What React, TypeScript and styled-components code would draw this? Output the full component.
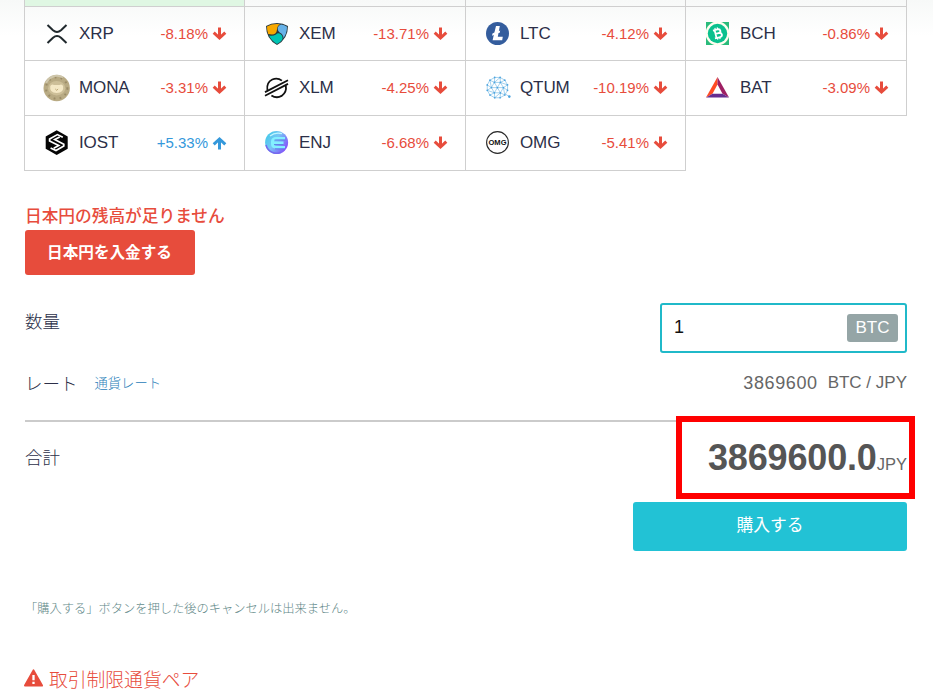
import React from "react";
import styled, { createGlobalStyle } from "styled-components";

const GlobalStyle = createGlobalStyle`
  * { box-sizing: border-box; }
  body {
    margin: 0;
    height: 695px;
    overflow: hidden;
    background: #fff linear-gradient(#f7f9f8, #ffffff) no-repeat;
    background-size: 100% 36px;
    font-family: "Liberation Sans", "Noto Sans CJK JP", sans-serif;
    color: #2c2f48;
  }
`;

const Page = styled.main`
  display: flex;
  flex-direction: column;
  width: 883px;
  margin-left: 24px;
`;

const Pairs = styled.section`
  display: grid;
  grid-template-columns: 220px 221px 220px 221px;
  grid-template-rows: 7px 54px 55px 55px;
  width: 883px;
  border-left: 1px solid #cfcfcf;
`;

const Cell = styled.div<{ $active?: boolean }>`
  display: flex;
  align-items: center;
  padding: 0 17px 0 18px;
  overflow: hidden;
  border-right: 1px solid #cfcfcf;
  border-bottom: 1px solid #cfcfcf;
  background: ${(p) => (p.$active ? "#dff7e3" : "transparent")};
`;

const Logo = styled.svg`
  flex: none;
  width: 28px;
  height: 28px;
`;

const Name = styled.span`
  flex: 1;
  margin-left: 8px;
  font-size: 17px;
  line-height: 20px;
  letter-spacing: -0.1px;
`;

const Change = styled.span<{ $up?: boolean }>`
  display: flex;
  align-items: center;
  gap: 4px;
  font-size: 15px;
  line-height: 20px;
  color: ${(p) => (p.$up ? "#3498db" : "#e74c3c")};
`;

const Arrow = styled.svg<{ $up?: boolean }>`
  width: 15px;
  height: 14px;
  transform: ${(p) => (p.$up ? "rotate(180deg)" : "none")};
`;

const Shortage = styled.p`
  margin: 34px 0 0;
  padding-left: 1px;
  height: 25px;
  font-size: 16.7px;
  font-weight: 500;
  line-height: 24px;
  color: #e74c3c;
`;

const Button = styled.button`
  border: 0;
  border-radius: 3px;
  color: #fff;
  font-family: inherit;
`;

const DepositButton = styled(Button)`
  width: 170px;
  height: 45px;
  margin-left: 0.5px;
  padding: 0 0 4px;
  background: #e74c3c;
  font-size: 15.6px;
  font-weight: 700;
`;

const Row = styled.div<{ $height: number; $top?: number }>`
  position: relative;
  display: flex;
  justify-content: space-between;
  height: ${(p) => p.$height}px;
  margin-top: ${(p) => p.$top || 0}px;
`;

const Label = styled.div<{ $top: number }>`
  display: flex;
  align-items: center;
  gap: 17px;
  height: 26px;
  margin-top: ${(p) => p.$top}px;
  padding-left: 1px;
  font-size: 17.5px;
  font-weight: 300;
`;

const RateLink = styled.a`
  font-size: 13.3px;
  color: #2980b9;
`;

const Field = styled.div`
  display: flex;
  align-items: center;
  justify-content: space-between;
  width: 247px;
  height: 50px;
  padding: 0 7px 1px 12px;
  border: 2px solid #20b9c9;
  border-radius: 3px;
  background: #fff;
  color: #111;
  font-size: 18px;
`;

const Unit = styled.span`
  width: 51px;
  height: 28px;
  border-radius: 3px;
  background: #95a5a6;
  color: #fff;
  font-size: 17px;
  line-height: 27px;
  text-align: center;
`;

const Rate = styled.div`
  display: flex;
  align-items: center;
  gap: 10px;
  height: 26px;
  margin-top: 17px;
  font-size: 17px;
  color: #666;
`;

const RateValue = styled.span`
  font-size: 18px;
  letter-spacing: 0.6px;
`;

const Divider = styled.hr`
  width: 882px;
  height: 2px;
  margin: 0 0 0 1px;
  border: 0;
  background: #cbcbcb;
`;

const Total = styled.div`
  display: flex;
  align-items: baseline;
  margin-top: 15px;
  font-size: 16.5px;
  line-height: 42px;
  color: #666;
`;

const Amount = styled.strong`
  font-size: 36px;
  letter-spacing: -0.15px;
  color: #555;
`;

const Highlight = styled.div`
  position: absolute;
  top: -6px;
  right: -8px;
  width: 239px;
  height: 83px;
  border: 6px solid #f00;
`;

const BuyButton = styled(Button)`
  align-self: flex-end;
  width: 274px;
  height: 49px;
  padding: 0 0 5px;
  background: #22c2d5;
  font-size: 16.8px;
  font-weight: 400;
`;

const Note = styled.p`
  margin: 46px 0 0;
  padding-left: 1px;
  height: 24px;
  font-size: 12.25px;
  font-weight: 300;
  line-height: 24px;
  color: #5f8888;
`;

const Restricted = styled.h2`
  display: flex;
  align-items: center;
  gap: 6px;
  height: 28px;
  margin: 43px 0 0;
  font-size: 18.8px;
  font-weight: 300;
  color: #e74c3c;
`;

const WarningMark = styled.svg`
  width: 19px;
  height: 18px;
`;

const ringPoints = (count: number, radius: number, turn = 0) =>
  Array.from({ length: count }, (_, i) => {
    const a = (i / count) * Math.PI * 2 + turn;
    return [14 + radius * Math.cos(a), 14 + radius * Math.sin(a)];
  });

const qtumOuter = ringPoints(12, 10.5, 0.26);
const qtumInner = ringPoints(6, 6, 0);

const logos: Record<string, React.ReactNode> = {
  XRP: (
    <g fill="none" stroke="#20292d" strokeWidth="2">
      <path d="M4.5 5 L10 10.3 Q14 13.8 18 10.3 L23.5 5" />
      <path d="M4.5 23 L10 17.7 Q14 14.2 18 17.7 L23.5 23" />
    </g>
  ),
  XEM: (
    <>
      <path d="M14 3 Q20 3 25 6 Q25 19 14 25 Q3 19 3 6 Q8 3 14 3Z" fill="#29383d" />
      <path d="M4 6.4 Q10 3.2 17 4.2 Q14 6 14 9.5 Q13.5 14.5 9 14.5 L5.2 14 Q3.9 10.5 4 6.4Z" fill="#f7a800" />
      <path d="M18 4.5 Q21.4 5 24 6.7 Q24 13 20.6 18 Q20 14 17 12.7 Q14 10.5 15 7 Q16 5 18 4.5Z" fill="#67b2e8" />
      <path d="M6 15.5 Q10 16.2 13 14.5 Q15 12.3 18 14.4 Q20.5 17 19 20 Q17 22.7 14 24 Q8.5 21 6 15.5Z" fill="#00c4b3" />
    </>
  ),
  LTC: (
    <>
      <circle cx="13.5" cy="13.5" r="11.5" fill="#345d9d" />
      <path d="M12 6 H15.8 L13.8 16.8 H18.8 L18.2 20.2 H8.6 L9.8 15 L8 15.7 L8.5 13.4 L10.4 12.6Z M13.8 11.4 L16.2 10.4 L15.7 12.8 L13.3 13.7Z" fill="#fff" />
    </>
  ),
  BCH: (
    <>
      <path d="M2 2 H25 V25 H2Z" fill="#2abb7b" />
      <circle cx="13.5" cy="13.5" r="11.9" fill="#fffdf0" />
      <circle cx="13.5" cy="13.5" r="9.7" fill="#0ac18e" />
      <g transform="translate(-.5 -.5) rotate(-14 14 14)" fill="none" stroke="#fff" strokeWidth="1.8">
        <path d="M10.3 10 H15 Q17.4 10 17.4 12 Q17.4 13.9 15 13.9 H12 M15 13.9 Q18 13.9 18 16 Q18 18.2 15 18.2 H10.3 M12 10 V18.2" />
        <path d="M12.8 8 V10 M15.2 8 V10 M12.8 18 V20.1 M15.2 18 V20.1" strokeWidth="1.2" />
      </g>
    </>
  ),
  MONA: (
    <>
      <circle cx="13.7" cy="14" r="13.2" fill="#b9ab84" />
      <circle cx="13.7" cy="14" r="10.7" fill="none" stroke="#9b8c67" strokeWidth="2" strokeDasharray="1.8 4.2" />
      <path d="M3 9 A12 12 0 0 1 20 3.5" fill="none" stroke="#d9d3be" strokeWidth="2" opacity=".7" />
      <ellipse cx="13.7" cy="14.2" rx="8.6" ry="7.3" fill="#cdbf98" />
      <path d="M7.3 12 Q8.7 9.4 11 11 H16.4 Q18.7 9.4 20.1 12 Q21.2 19 13.7 19 Q6.2 19 7.3 12Z" fill="#f4e8c5" />
      <path d="M12.3 15 L13.7 16.3 L15.1 15" fill="none" stroke="#b7a26f" strokeWidth=".9" />
    </>
  ),
  XLM: (
    <g fill="none" stroke="#111" strokeWidth="1.8">
      <path d="M4.4 16 Q3.2 8.5 9.3 5.5 Q14.4 3.2 18.9 6.6" />
      <path d="M22.8 11.5 Q24 18.3 18.6 21.9 Q13.6 24.8 8.4 21.4" />
      <path d="M2 18.1 L25 6.3 M2 21.7 L25 9.9" />
    </g>
  ),
  QTUM: (
    <g transform="translate(-.6 -.4)" fill="none" stroke="#76b9e5" strokeWidth=".65">
      <polygon points={qtumOuter.map((p) => p.join(",")).join(" ")} />
      <polygon points={qtumInner.map((p) => p.join(",")).join(" ")} />
      {qtumInner.map(([x, y], i) => (
        <React.Fragment key={i}>
          <path d={`M14 14 L${x} ${y}`} />
          {[-1, 0, 1].map((o) => {
            const q = qtumOuter[(i * 2 + o + 12) % 12];
            return <path key={o} d={`M${x} ${y} L${q[0]} ${q[1]}`} />;
          })}
        </React.Fragment>
      ))}
      {[...qtumOuter, ...qtumInner, [14, 14]].map(([x, y], i) => (
        <circle key={i} cx={x} cy={y} r=".85" fill="#4aa3df" stroke="none" />
      ))}
      <path d="M21.5 20 L25.6 22.9" />
      <circle cx="25.9" cy="23" r="1.3" fill="#4aa3df" stroke="none" />
    </g>
  ),
  BAT: (
    <>
      <path d="M13.5 3 L2 23.5 L8.5 19.7 L13.5 10.5Z" fill="#ff4b24" />
      <path d="M13.5 3 L25 23.5 L18.5 19.7 L13.5 10.5Z" fill="#9e1f63" />
      <path d="M2 23.5 H25 L18.5 19.7 H8.5Z" fill="#662d91" />
    </>
  ),
  IOST: (
    <>
      <path d="M13.7 1.3 L24.7 7.5 V19.7 L13.7 25.9 L2.7 19.7 V7.5Z" fill="#050505" />
      <g fill="none" stroke="#fff" strokeWidth="1.7">
        <path d="M19.8 8.3 L14.4 5.6 L6.6 10.1 V12 L15.7 16.6 L10.7 19.2" />
        <path d="M7.6 18.9 L13 21.6 L20.8 17.1 V15.2 L11.7 10.6 L16.7 8" />
      </g>
    </>
  ),
  ENJ: (
    <>
      <defs>
        <linearGradient id="enj" x1="0" y1="0" x2="1" y2=".65">
          <stop offset="0" stopColor="#35cbe5" />
          <stop offset=".5" stopColor="#77c5f6" />
          <stop offset="1" stopColor="#8453fa" />
        </linearGradient>
      </defs>
      <circle cx="13.6" cy="13.5" r="11.5" fill="url(#enj)" />
      <path d="M3 16 A10.8 10.8 0 0 0 18 23.2" fill="none" stroke="#7668ee" strokeWidth="1.5" />
      <path d="M22 8 H13.5 Q8 8 8 12.5 V15 Q8 19.5 13.5 19.5 H22 V16.9 H13 Q11 16.9 11 15.2 H20.5 V12.6 H11 Q11 10.6 13.5 10.6 H22Z" fill="#83f0ff" />
      <path d="M11.5 11 H22.5 M11 15.5 H20.5 M12 19.8 H22" stroke="#5778e4" strokeWidth=".8" />
      <path d="M7 7 Q12 3 19 4.7" fill="none" stroke="#c1f6ff" strokeWidth="1.2" />
    </>
  ),
  OMG: (
    <>
      <circle cx="13.5" cy="13.5" r="10.9" fill="#fff" stroke="#292929" strokeWidth="1.1" />
      <text x="13.5" y="16.2" textAnchor="middle" textLength="18" lengthAdjust="spacingAndGlyphs" fontFamily="Liberation Sans, sans-serif" fontSize="7.3" fontWeight="700" fill="#111">OMG</text>
    </>
  ),
};

const pairs = [
  ["XRP", "-8.18%"], ["XEM", "-13.71%"], ["LTC", "-4.12%"], ["BCH", "-0.86%"],
  ["MONA", "-3.31%"], ["XLM", "-4.25%"], ["QTUM", "-10.19%"], ["BAT", "-3.09%"],
  ["IOST", "+5.33%"], ["ENJ", "-6.68%"], ["OMG", "-5.41%"],
];

function Pair({ name, change }: { name: string; change: string }) {
  const up = change.startsWith("+");
  return (
    <Cell>
      <Logo viewBox="0 0 28 28">{logos[name]}</Logo>
      <Name>{name}</Name>
      <Change $up={up}>
        {change}
        <Arrow $up={up} viewBox="0 0 15 14">
          <path d="M7.5 .4 V11 M1.7 5.6 L7.5 11 L13.3 5.6" fill="none" stroke="currentColor" strokeWidth="3" />
        </Arrow>
      </Change>
    </Cell>
  );
}

export default function App() {
  return (
    <>
      <GlobalStyle />
      <Page>
        <Pairs>
          <Cell $active />
          <Cell />
          <Cell />
          <Cell />
          {pairs.map(([name, change]) => (
            <Pair key={name} name={name} change={change} />
          ))}
        </Pairs>
        <Shortage>日本円の残高が足りません</Shortage>
        <DepositButton>日本円を入金する</DepositButton>
        <Row $height={50} $top={28}>
          <Label $top={4}>数量</Label>
          <Field>
            1<Unit>BTC</Unit>
          </Field>
        </Row>
        <Row $height={67}>
          <Label $top={16}>
            レート<RateLink>通貨レート</RateLink>
          </Label>
          <Rate>
            <RateValue>3869600</RateValue>BTC / JPY
          </Rate>
        </Row>
        <Divider />
        <Row $height={80}>
          <Label $top={21}>合計</Label>
          <Total>
            <Amount>3869600.0</Amount>JPY
          </Total>
          <Highlight />
        </Row>
        <BuyButton>購入する</BuyButton>
        <Note>「購入する」ボタンを押した後のキャンセルは出来ません。</Note>
        <Restricted>
          <WarningMark viewBox="0 0 19 18">
            <path d="M9.5 1.4 L18 16.6 H1Z" fill="#e74c3c" stroke="#e74c3c" strokeWidth="2" strokeLinejoin="round" />
            <path d="M9.5 6 V11.3 M9.5 12.7 V15" stroke="#fff" strokeWidth="2.3" />
          </WarningMark>
          取引制限通貨ペア
        </Restricted>
      </Page>
    </>
  );
}
